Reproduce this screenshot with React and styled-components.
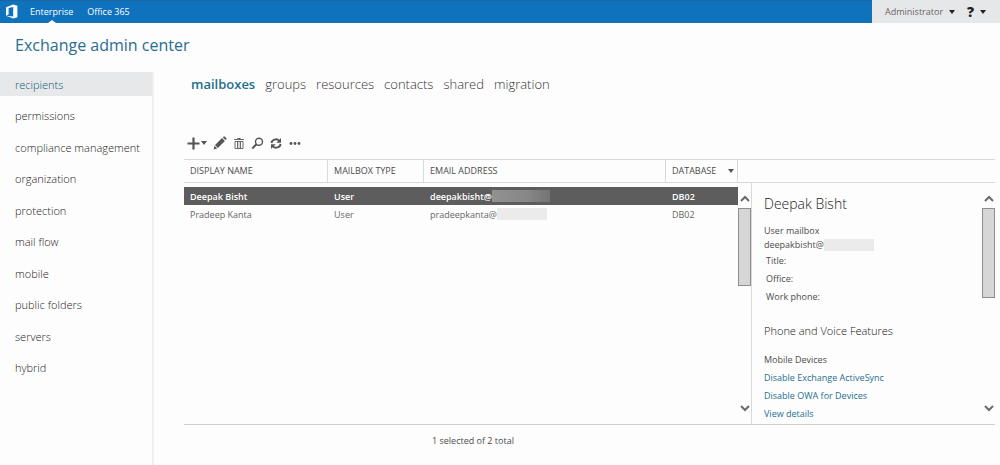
import React from 'react';
import styled, { createGlobalStyle } from 'styled-components';

const GlobalStyle = createGlobalStyle`
  * { box-sizing: border-box; }
  body {
    margin: 0;
    background: #fdfdfd;
    color: #4c4c4c;
    font: 9px/18px "Open Sans", "Noto Sans", sans-serif;
  }
  button { font: inherit; color: inherit; background: none; border: 0; padding: 0; cursor: pointer; }
  a { text-decoration: none; color: inherit; }
  ul, dl, dd, h1, h2, h3, p { margin: 0; padding: 0; list-style: none; font-weight: 400; }
`;

const Page = styled.div`
  min-height: 100vh;
  display: flex;
  flex-direction: column;
`;

const TopBar = styled.header`
  display: flex;
  height: 23px;
  background: #0f72bd;
  border-top: 1px solid #1b66a0;
  color: #fff;
`;

const Logo = styled.svg`
  width: 13px;
  height: 15px;
  margin: 3px 12px 0 5px;
`;

const SuiteLinks = styled.nav`
  flex: 1;
  display: flex;
  gap: 14px;
`;

const SuiteLink = styled.a`
  position: relative;
  line-height: 21px;
  &[aria-current]::after {
    content: "";
    position: absolute;
    left: 50%;
    bottom: 0;
    margin-left: -4px;
    border: 4px solid transparent;
    border-top: 0;
    border-bottom: 3px solid #fdfdfd;
  }
`;

const Account = styled.div`
  display: flex;
  align-items: center;
  gap: 12px;
  width: 128px;
  height: 23px;
  margin-top: -1px;
  padding-left: 13px;
  background: #e6e7e9;
  color: #666;
`;

const MenuButton = styled.button`
  display: flex;
  align-items: center;
  gap: 6px;
  line-height: 20px;
`;

const HelpMark = styled.span`
  font-size: 14px;
  font-weight: 800;
  color: #222;
`;

const Caret = styled.span`
  border: 3px solid transparent;
  border-top: 4px solid ${p => p.$color || '#222'};
  border-bottom: 0;
`;

const Title = styled.h1`
  padding: 9px 15px 0;
  height: 49px;
  font-size: 16px;
  line-height: 26px;
  color: #2a6d8f;
`;

const Body = styled.div`
  flex: 1;
  display: flex;
`;

const SideNav = styled.nav`
  flex: none;
  width: 154px;
  border-right: 2px solid #efefef;
`;

const NavList = styled.ul`
  height: 307px;
  display: flex;
  flex-direction: column;
  justify-content: space-between;
`;

const NavLink = styled.a`
  display: block;
  padding: 2px 0 0 15px;
  font-size: 11px;
  font-weight: 300;
  line-height: 22px;
  white-space: nowrap;
  color: #222;
  &[aria-current] { background: #e7e8ea; color: #0f5578; }
`;

const Main = styled.main`
  flex: 1;
  min-width: 0;
  display: flex;
  flex-direction: column;
  padding: 0 5px 0 30px;
`;

const Tabs = styled.nav`
  display: flex;
  gap: 10px;
  padding-left: 7px;
  font-size: 13px;
  font-weight: 300;
  line-height: 24px;
  color: #333;
`;

const Tab = styled.a`
  &[aria-current] { color: #24708c; font-weight: 600; }
`;

const Toolbar = styled.div`
  display: flex;
  align-items: center;
  gap: 6px;
  height: 20px;
  margin: 37px 0 6px 3px;
  color: #555;
`;

const ToolButton = styled.button`
  display: flex;
  align-items: center;
  gap: 1px;
  svg { display: block; }
`;

const Panel = styled.div`
  flex: 1;
  display: grid;
  grid-template-columns: minmax(0, 1fr) 13px 244px;
  border-bottom: 1px solid #cfcfcf;
`;

const Grid = styled.table`
  width: 100%;
  table-layout: fixed;
  border-collapse: separate;
  border-spacing: 0;
  align-self: start;
`;

const Col = styled.col`
  width: ${p => p.$width};
`;

const HeadCell = styled.th`
  height: 24px;
  padding: 0 6px;
  text-align: left;
  font-weight: 400;
  line-height: 20px;
  color: #4c4c4c;
  border: solid #d9d9d9;
  border-width: 1px 1px 1px 0;
`;

const HeadLabel = styled.span`
  display: flex;
  align-items: center;
  justify-content: space-between;
  margin-right: -3px;
`;

const Gap = styled.tbody`
  td { height: 4px; padding: 0; }
`;

const Row = styled.tr`
  height: 18px;
  color: #666;
  &[aria-selected="true"] { background: #5d5d5d; color: #fff; font-weight: 600; }
  td { padding: 0 6px; line-height: 17px; white-space: nowrap; }
`;

const Address = styled.span`
  display: flex;
  align-items: center;
`;

const Redacted = styled.span`
  width: ${p => p.$width}px;
  height: 12px;
  background: ${p => p.$dark ? 'linear-gradient(90deg, #929292, #878787 60%, #747474)' : '#ebebeb'};
`;

const ScrollColumn = styled.div`
  display: flex;
  flex-direction: column;
`;

const HeadCap = styled.div`
  height: 24px;
  border: solid #d9d9d9;
  border-width: 1px 0;
`;

const ScrollBar = styled.div`
  flex: ${p => p.$grow ? 1 : 'none'};
  width: 13px;
  display: flex;
  flex-direction: column;
  align-items: center;
  padding: 9px 0;
`;

const ScrollArrow = styled.button`
  height: 14px;
  svg { display: block; }
`;

const Thumb = styled.div`
  width: 13px;
  height: ${p => p.$height}px;
  margin: 2px 0 auto;
  background: #d6d6d6;
  border: 1px solid #8d8d8d;
`;

const Details = styled.aside`
  display: flex;
  flex-direction: column;
`;

const DetailsBody = styled.div`
  flex: 1;
  display: flex;
  border-left: 1px solid #d9d9d9;
`;

const DetailsText = styled.div`
  flex: 1;
  padding: 9px 0 0 12px;
`;

const PersonName = styled.h2`
  font-size: 14px;
  font-weight: 300;
  line-height: 24px;
  color: #222;
  margin-bottom: 8px;
`;

const Summary = styled.div`
  line-height: 14px;
`;

const Fields = styled.dl`
  padding-left: 2px;
  div { display: flex; }
`;

const Section = styled.h3`
  margin: 16px 0 11px;
  font-size: 11px;
  font-weight: 300;
  line-height: 18px;
  color: #111;
`;

const ActionLink = styled.a`
  display: block;
  color: #26708f;
`;

const Footer = styled.footer`
  height: 40px;
  padding: 7px 0 0 248px;
`;

function Chevron({ down }) {
  return (
    <svg width="10" height="14" viewBox="0 0 10 14" fill="none" stroke="#6a6a6a" strokeWidth="2">
      <path d={down ? 'M1 5l4 4 4-4' : 'M1 9l4-4 4 4'} />
    </svg>
  );
}

function Scroller({ thumb, name, grow }) {
  return (
    <ScrollBar $grow={grow}>
      <ScrollArrow aria-label={`Scroll ${name} up`}><Chevron /></ScrollArrow>
      <Thumb $height={thumb} />
      <ScrollArrow aria-label={`Scroll ${name} down`}><Chevron down /></ScrollArrow>
    </ScrollBar>
  );
}

const sections = ['recipients', 'permissions', 'compliance management', 'organization', 'protection',
  'mail flow', 'mobile', 'public folders', 'servers', 'hybrid'];
const tabs = ['mailboxes', 'groups', 'resources', 'contacts', 'shared', 'migration'];
const mailboxes = [
  { name: 'Deepak Bisht', type: 'User', alias: 'deepakbisht@', hidden: 58, db: 'DB02' },
  { name: 'Pradeep Kanta', type: 'User', alias: 'pradeepkanta@', hidden: 50, db: 'DB02' },
];

export default function App() {
  return (
    <Page>
      <GlobalStyle />
      <TopBar>
        <Logo viewBox="0 0 13 15" aria-label="Office">
          <path fill="#fff" fillRule="evenodd" d="M1 3.2 8.2.6 12.4 1.8v11.4L8.2 14.4 1 11.7l7.2.9V2.9L3.6 4v6.6L1 11.7z" />
        </Logo>
        <SuiteLinks aria-label="Suite">
          <SuiteLink href="#enterprise" aria-current="page">Enterprise</SuiteLink>
          <SuiteLink href="#office365">Office 365</SuiteLink>
        </SuiteLinks>
        <Account>
          <MenuButton>Administrator<Caret /></MenuButton>
          <MenuButton aria-label="Help"><HelpMark>?</HelpMark><Caret /></MenuButton>
        </Account>
      </TopBar>
      <Title>Exchange admin center</Title>
      <Body>
        <SideNav aria-label="Features">
          <NavList>
            {sections.map((s, i) => (
              <li key={s}><NavLink href={`#${s}`} aria-current={i === 0 ? 'page' : undefined}>{s}</NavLink></li>
            ))}
          </NavList>
        </SideNav>
        <Main>
          <Tabs aria-label="Recipients">
            {tabs.map((t, i) => (
              <Tab key={t} href={`#${t}`} aria-current={i === 0 ? 'page' : undefined}>{t}</Tab>
            ))}
          </Tabs>
          <Toolbar>
            <ToolButton aria-label="New">
              <svg width="13" height="13" viewBox="0 0 13 13"><path d="M6.5 .5v12M.5 6.5h12" stroke="currentColor" strokeWidth="2.2" /></svg>
              <Caret $color="#555" />
            </ToolButton>
            <ToolButton aria-label="Edit">
              <svg width="14" height="14" viewBox="0 0 14 14" fill="currentColor"><path d="M9 2.1l2.9 2.9-7 7L2 9.1zM9.8 1.4l.9-.8q.6-.4 1.1 0l1.6 1.6q.4.5 0 1l-.8.9zM1.5 9.8l2.7 2.7-3.6.9z" /></svg>
            </ToolButton>
            <ToolButton aria-label="Delete">
              <svg width="12" height="13" viewBox="0 0 12 13" fill="none" stroke="#6a6a6a"><path d="M1 2.5h10M4.5 2.5v-1h3v1" /><path d="M2 4.5v7h8v-7zM4.5 5v6M7.5 5v6" /><path d="M6 5v6" opacity=".5" /></svg>
            </ToolButton>
            <ToolButton aria-label="Search">
              <svg width="13" height="13" viewBox="0 0 13 13" fill="none" stroke="currentColor"><circle cx="8" cy="4.7" r="3.5" strokeWidth="1.4" /><path d="M5.4 7.2L1.3 11.5" strokeWidth="2" /></svg>
            </ToolButton>
            <ToolButton aria-label="Refresh">
              <svg width="12" height="13" viewBox="0 0 12 13"><path d="M1.4 6A4.6 4.3 0 0 1 9.2 3.6M10.6 7A4.6 4.3 0 0 1 2.8 9.4" fill="none" stroke="currentColor" strokeWidth="1.9" /><path d="M11 1v4.8H6.3zM1 12V7.2h4.7z" fill="currentColor" /></svg>
            </ToolButton>
            <ToolButton aria-label="More">
              <svg width="14" height="13" viewBox="0 0 14 13" fill="currentColor"><circle cx="3" cy="6.5" r="1.4" /><circle cx="7" cy="6.5" r="1.4" /><circle cx="11" cy="6.5" r="1.4" /></svg>
            </ToolButton>
          </Toolbar>
          <Panel>
            <Grid>
              <colgroup><Col $width="26%" /><Col $width="96px" /><Col $width="auto" /><Col $width="72px" /></colgroup>
              <thead>
                <tr>
                  <HeadCell>DISPLAY NAME</HeadCell>
                  <HeadCell>MAILBOX TYPE</HeadCell>
                  <HeadCell>EMAIL ADDRESS</HeadCell>
                  <HeadCell aria-sort="descending"><HeadLabel>DATABASE<Caret $color="#555" /></HeadLabel></HeadCell>
                </tr>
              </thead>
              <Gap><tr><td colSpan={4} /></tr></Gap>
              <tbody>
                {mailboxes.map((m, i) => (
                  <Row key={m.name} aria-selected={i === 0}>
                    <td>{m.name}</td>
                    <td>{m.type}</td>
                    <td><Address>{m.alias}<Redacted $width={m.hidden} $dark={i === 0} /></Address></td>
                    <td>{m.db}</td>
                  </Row>
                ))}
              </tbody>
            </Grid>
            <ScrollColumn><HeadCap /><Scroller thumb={78} name="list" grow /></ScrollColumn>
            <Details>
              <HeadCap />
              <DetailsBody>
                <DetailsText>
                  <PersonName>Deepak Bisht</PersonName>
                  <Summary>
                    <p>User mailbox</p>
                    <Address>deepakbisht@<Redacted $width={50} /></Address>
                  </Summary>
                  <Fields>
                    <div><dt>Title:</dt><dd /></div>
                    <div><dt>Office:</dt><dd /></div>
                    <div><dt>Work phone:</dt><dd /></div>
                  </Fields>
                  <Section>Phone and Voice Features</Section>
                  <p>Mobile Devices</p>
                  <ActionLink href="#activesync">Disable Exchange ActiveSync</ActionLink>
                  <ActionLink href="#owa">Disable OWA for Devices</ActionLink>
                  <ActionLink href="#details">View details</ActionLink>
                </DetailsText>
                <Scroller thumb={90} name="details" />
              </DetailsBody>
            </Details>
          </Panel>
          <Footer>1 selected of 2 total</Footer>
        </Main>
      </Body>
    </Page>
  );
}
